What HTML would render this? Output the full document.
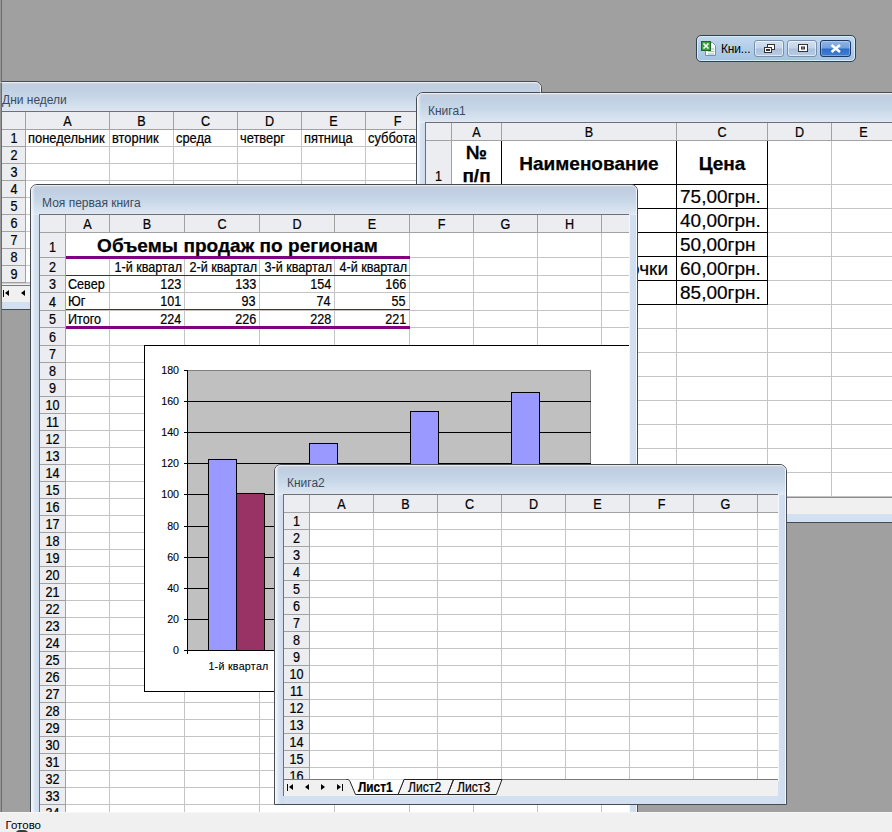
<!DOCTYPE html>
<html lang="ru"><head><meta charset="utf-8"><title>Excel</title>
<style>
html,body{margin:0;padding:0}
body{width:892px;height:832px;overflow:hidden;position:relative;background:#a0a0a0;font-family:"Liberation Sans",sans-serif;font-size:13.33px;color:#000}
div,span,i,b{position:absolute;box-sizing:border-box;display:block;white-space:nowrap}
i{font-style:normal}
.win{border:1px solid #474b52;border-radius:7px 7px 0 0;overflow:hidden;background:linear-gradient(90deg,#f6f9fd 0,#e9f0f9 2px,#d6e2f1 4px,#cedcee 8px,rgba(206,220,238,0) 9px),linear-gradient(270deg,#f4f8fc 0,#f4f8fc 1px,#d0ddf0 1px,#d3e0f1 8px,rgba(211,224,241,0) 9px),#d3e0f1}
.win:before{content:"";position:absolute;left:0;top:0;right:0;height:12px;border:1px solid rgba(255,255,255,.42);border-bottom:0;border-radius:6px 6px 0 0;z-index:2}
.tb{left:0;top:0;right:0;height:30px;background:linear-gradient(90deg,rgba(255,255,255,.75) 0,rgba(255,255,255,.4) 2px,rgba(255,255,255,0) 4px),linear-gradient(270deg,rgba(255,255,255,.65) 0,rgba(255,255,255,.65) 1px,rgba(255,255,255,0) 1px),linear-gradient(#dfe5ee 0,#c6cedc 2px,#bfcfe2 6px,#c9d8e8 55%,#dbe5f2 92%,#e3eaf5 100%)}
.tt{font-size:12px;line-height:14px;color:#394b60;letter-spacing:0}
.sheet{background:#fff;overflow:hidden;border-left:1px solid #6e7074;border-top:1px solid #6e7074;box-shadow:1px 1px 0 #f4f8fc}
.hr{left:0;top:0;right:0;background:#ecedf1}
.hc{left:0;top:0;bottom:0;background:#ecedf1}
.h{left:0;right:0;height:1px;background:#c4c4c4}
.v{top:0;bottom:0;width:1px;background:#c4c4c4}
.hh{height:1px;background:#a2a2a2}
.hv{width:1px;background:#a2a2a2}
.c{text-align:center}
.r{text-align:right}
.t{line-height:17px;height:17px;font-size:14px;-webkit-text-stroke:.22px #000;transform:scaleX(.9);transform-origin:0 50%}
.t.c{transform-origin:50% 50%}
.t.r{transform-origin:100% 50%}
.big{font-size:19px}
.k{background:#000}
.p{background:#800080}
.bar{background:#f0f0f0}
</style></head>
<body>
<div id="mini" style="left:696px;top:35px;width:160px;height:27px;border:1px solid #2f4253;border-radius:5px;background:linear-gradient(#c4d9ee 0,#b2cde9 50%,#a5c4e3 100%);box-shadow:inset 0 0 0 1px #d4eef9">
<svg style="position:absolute;left:3px;top:4px" width="17" height="17" viewBox="0 0 17 17"><path d="M5.500 2.500h7l3 3v10h-10z" fill="#f4f7fc" stroke="#6f8fc2"/><path d="M8 9h6M8 11.500h6M8 14h6" stroke="#9db6dd"/><rect x="1.500" y="1.500" width="9" height="9" fill="#3f9e3c" stroke="#1f6b22"/><path d="M3.500 3.500l5 5M8.500 3.500l-5 5" stroke="#fff" stroke-width="1.600"/></svg>
<span style="left:24px;top:6px;font-size:12px;line-height:15px;color:#000;letter-spacing:-.15px">Кни...</span>
<div style="left:57px;top:4px;width:30px;height:17px;border:1px solid #7990aa;border-radius:3px;background:linear-gradient(#d3e1f0 0,#c3d5e9 48%,#a9c0da 52%,#b9cde4 100%);box-shadow:inset 0 0 0 1px rgba(255,255,255,.55)">
<svg style="position:absolute;left:8px;top:2px" width="13" height="11" viewBox="0 0 13 11"><rect x="4.500" y="1.500" width="7" height="5" fill="#fff" stroke="#333" /><rect x="1.500" y="4.500" width="7" height="5" fill="#fff" stroke="#333"/><rect x="3.500" y="6.500" width="3" height="1" fill="#ccd" stroke="#333"/></svg></div>
<div style="left:90px;top:4px;width:30px;height:17px;border:1px solid #7990aa;border-radius:3px;background:linear-gradient(#d3e1f0 0,#c3d5e9 48%,#a9c0da 52%,#b9cde4 100%);box-shadow:inset 0 0 0 1px rgba(255,255,255,.55)">
<svg style="position:absolute;left:9px;top:2px" width="12" height="11" viewBox="0 0 12 11"><rect x="1.500" y="1.500" width="9" height="7" fill="#fff" stroke="#333"/><rect x="4.500" y="4" width="3" height="2" fill="#aab" stroke="#333"/></svg></div>
<div style="left:123px;top:4px;width:31px;height:17px;border:1px solid #1d3a63;border-radius:3px;background:linear-gradient(#8fb5e6 0,#729fde 48%,#2d6cc6 52%,#3f80d6 100%);box-shadow:inset 0 0 0 1px rgba(255,255,255,.3)">
<svg style="position:absolute;left:9px;top:3px" width="12" height="9" viewBox="0 0 12 9"><path d="M1.500 1l8.500 7M10 1l-8.500 7" stroke="#fff" stroke-width="2.500"/></svg></div>
</div>
<div class="win" id="w1" style="left:-6px;top:81px;width:548px;height:229px">
<div class="tb"></div>
<span class="tt" style="left:7px;top:11px">Дни недели</span>
<div class="sheet" style="left:6px;top:29px;width:540px;height:172px">
<i class="h" style="top:34px"></i>
<i class="h" style="top:51px"></i>
<i class="h" style="top:68px"></i>
<i class="h" style="top:85px"></i>
<i class="h" style="top:102px"></i>
<i class="h" style="top:119px"></i>
<i class="h" style="top:136px"></i>
<i class="h" style="top:153px"></i>
<i class="h" style="top:170px"></i>
<i class="v" style="left:107px"></i>
<i class="v" style="left:171px"></i>
<i class="v" style="left:235px"></i>
<i class="v" style="left:299px"></i>
<i class="v" style="left:363px"></i>
<i class="v" style="left:427px"></i>
<i class="v" style="left:491px"></i>
<i class="v" style="left:555px"></i>
<span class="t" style="left:26px;top:18px;transform:scaleX(.92)">понедельник</span><span class="t" style="left:110px;top:18px;transform:scaleX(.92)">вторник</span><span class="t" style="left:174px;top:18px;transform:scaleX(.92)">среда</span><span class="t" style="left:238px;top:18px;transform:scaleX(.92)">четверг</span><span class="t" style="left:302px;top:18px;transform:scaleX(.92)">пятница</span><span class="t" style="left:366px;top:18px;transform:scaleX(.92)">суббота</span>
<div class="hr" style="height:17px"></div>
<div class="hc" style="width:24px"></div>
<i class="hh" style="left:0;right:0;top:17px"></i>
<i class="hv" style="top:0;bottom:0;left:23px"></i>
<i class="hv" style="top:0;height:17px;left:107px"></i>
<i class="hv" style="top:0;height:17px;left:171px"></i>
<i class="hv" style="top:0;height:17px;left:235px"></i>
<i class="hv" style="top:0;height:17px;left:299px"></i>
<i class="hv" style="top:0;height:17px;left:363px"></i>
<i class="hv" style="top:0;height:17px;left:427px"></i>
<i class="hv" style="top:0;height:17px;left:491px"></i>
<i class="hv" style="top:0;height:17px;left:555px"></i>
<i class="hh" style="left:0;width:24px;top:34px"></i>
<i class="hh" style="left:0;width:24px;top:51px"></i>
<i class="hh" style="left:0;width:24px;top:68px"></i>
<i class="hh" style="left:0;width:24px;top:85px"></i>
<i class="hh" style="left:0;width:24px;top:102px"></i>
<i class="hh" style="left:0;width:24px;top:119px"></i>
<i class="hh" style="left:0;width:24px;top:136px"></i>
<i class="hh" style="left:0;width:24px;top:153px"></i>
<i class="hh" style="left:0;width:24px;top:170px"></i>
<span class="t c" style="left:24px;width:83px;top:1px">A</span>
<span class="t c" style="left:108px;width:63px;top:1px">B</span>
<span class="t c" style="left:172px;width:63px;top:1px">C</span>
<span class="t c" style="left:236px;width:63px;top:1px">D</span>
<span class="t c" style="left:300px;width:63px;top:1px">E</span>
<span class="t c" style="left:364px;width:63px;top:1px">F</span>
<span class="t c" style="left:428px;width:63px;top:1px">G</span>
<span class="t c" style="left:492px;width:63px;top:1px">H</span>
<span class="t c" style="left:0;width:24px;top:18px">1</span>
<span class="t c" style="left:0;width:24px;top:35px">2</span>
<span class="t c" style="left:0;width:24px;top:52px">3</span>
<span class="t c" style="left:0;width:24px;top:69px">4</span>
<span class="t c" style="left:0;width:24px;top:86px">5</span>
<span class="t c" style="left:0;width:24px;top:103px">6</span>
<span class="t c" style="left:0;width:24px;top:120px">7</span>
<span class="t c" style="left:0;width:24px;top:137px">8</span>
<span class="t c" style="left:0;width:24px;top:154px">9</span>
</div>
<div class="bar" style="left:7px;top:201px;width:540px;height:19px;border-top:1px solid #cfcfcf"><i style="left:0;right:0;top:1px;height:1px;background:#77797d"></i><i class="k" style="left:1px;top:6px;width:1px;height:7px"></i><i style="left:3px;top:6px;border-right:4px solid #000;border-top:3.500px solid transparent;border-bottom:3.500px solid transparent;width:0;height:0"></i><i style="left:19px;top:6px;border-right:4px solid #000;border-top:3.500px solid transparent;border-bottom:3.500px solid transparent;width:0;height:0"></i><i style="left:35px;top:6px;border-left:4px solid #000;border-top:3.500px solid transparent;border-bottom:3.500px solid transparent;width:0;height:0"></i><i style="left:51px;top:6px;border-left:4px solid #000;border-top:3.500px solid transparent;border-bottom:3.500px solid transparent;width:0;height:0"></i><i class="k" style="left:56px;top:6px;width:1px;height:7px"></i></div>
</div>
<div class="win" id="w2" style="left:416px;top:92px;width:485px;height:431px">
<div class="tb"></div>
<span class="tt" style="left:11px;top:11px">Книга1</span>
<div class="sheet" style="left:8px;top:29px;width:480px;height:375px">
<i class="h" style="top:61px"></i>
<i class="h" style="top:85px"></i>
<i class="h" style="top:109px"></i>
<i class="h" style="top:133px"></i>
<i class="h" style="top:157px"></i>
<i class="h" style="top:181px"></i>
<i class="h" style="top:205px"></i>
<i class="h" style="top:229px"></i>
<i class="h" style="top:253px"></i>
<i class="h" style="top:277px"></i>
<i class="h" style="top:301px"></i>
<i class="h" style="top:325px"></i>
<i class="h" style="top:349px"></i>
<i class="h" style="top:373px"></i>
<i class="v" style="left:75px"></i>
<i class="v" style="left:250px"></i>
<i class="v" style="left:341px"></i>
<i class="v" style="left:405px"></i>
<i class="v" style="left:469px"></i>
<i class="k" style="left:26px;width:316px;top:17px;height:1px"></i><i class="k" style="left:26px;width:316px;top:61px;height:1px"></i><i class="k" style="left:26px;width:316px;top:85px;height:1px"></i><i class="k" style="left:26px;width:316px;top:109px;height:1px"></i><i class="k" style="left:26px;width:316px;top:133px;height:1px"></i><i class="k" style="left:26px;width:316px;top:157px;height:1px"></i><i class="k" style="left:26px;width:316px;top:181px;height:1px"></i><i class="k" style="left:25px;top:17px;width:1px;height:165px"></i><i class="k" style="left:75px;top:17px;width:1px;height:165px"></i><i class="k" style="left:250px;top:17px;width:1px;height:165px"></i><i class="k" style="left:341px;top:17px;width:1px;height:165px"></i><span class="c" style="left:26px;width:49px;top:18px;font-weight:bold;font-size:19px;-webkit-text-stroke:.25px #000;line-height:23px">№<br>п/п</span><span class="c" style="left:76px;width:174px;top:19px;font-weight:bold;font-size:19px;-webkit-text-stroke:.25px #000;line-height:43px">Наименование</span><span class="c" style="left:251px;width:90px;top:19px;font-weight:bold;font-size:19px;-webkit-text-stroke:.25px #000;line-height:43px">Цена</span><span style="left:254px;top:62px;font-size:19px;-webkit-text-stroke:.2px #000;line-height:24px">75,00грн.</span><span style="left:254px;top:86px;font-size:19px;-webkit-text-stroke:.2px #000;line-height:24px">40,00грн.</span><span style="left:254px;top:110px;font-size:19px;-webkit-text-stroke:.2px #000;line-height:24px">50,00грн</span><span style="left:254px;top:134px;font-size:19px;-webkit-text-stroke:.2px #000;line-height:24px">60,00грн.</span><span style="left:254px;top:158px;font-size:19px;-webkit-text-stroke:.2px #000;line-height:24px">85,00грн.</span><span style="left:78px;top:62px;font-size:19px;-webkit-text-stroke:.2px #000;line-height:24px">Карандаши</span><span style="left:78px;top:86px;font-size:19px;-webkit-text-stroke:.2px #000;line-height:24px">Ручки</span><span style="left:78px;top:110px;font-size:19px;-webkit-text-stroke:.2px #000;line-height:24px">Тетради</span><span style="right:237px;top:134px;font-size:19px;-webkit-text-stroke:.2px #000;line-height:24px">Ручки-закладочки</span><span style="left:78px;top:158px;font-size:19px;-webkit-text-stroke:.2px #000;line-height:24px">Линейки</span>
<div class="hr" style="height:17px"></div>
<div class="hc" style="width:25px"></div>
<i class="hh" style="left:0;right:0;top:17px"></i>
<i class="hv" style="top:0;bottom:0;left:25px"></i>
<i class="hv" style="top:0;height:17px;left:75px"></i>
<i class="hv" style="top:0;height:17px;left:250px"></i>
<i class="hv" style="top:0;height:17px;left:341px"></i>
<i class="hv" style="top:0;height:17px;left:405px"></i>
<i class="hv" style="top:0;height:17px;left:469px"></i>
<i class="hh" style="left:0;width:25px;top:61px"></i>
<i class="hh" style="left:0;width:25px;top:85px"></i>
<i class="hh" style="left:0;width:25px;top:109px"></i>
<i class="hh" style="left:0;width:25px;top:133px"></i>
<i class="hh" style="left:0;width:25px;top:157px"></i>
<i class="hh" style="left:0;width:25px;top:181px"></i>
<i class="hh" style="left:0;width:25px;top:205px"></i>
<i class="hh" style="left:0;width:25px;top:229px"></i>
<i class="hh" style="left:0;width:25px;top:253px"></i>
<i class="hh" style="left:0;width:25px;top:277px"></i>
<i class="hh" style="left:0;width:25px;top:301px"></i>
<i class="hh" style="left:0;width:25px;top:325px"></i>
<i class="hh" style="left:0;width:25px;top:349px"></i>
<i class="hh" style="left:0;width:25px;top:373px"></i>
<span class="t c" style="left:26px;width:49px;top:1px">A</span>
<span class="t c" style="left:76px;width:174px;top:1px">B</span>
<span class="t c" style="left:251px;width:90px;top:1px">C</span>
<span class="t c" style="left:342px;width:63px;top:1px">D</span>
<span class="t c" style="left:406px;width:63px;top:1px">E</span>
<span class="t c" style="left:0;width:25px;top:45px">1</span>
<span class="t c" style="left:0;width:25px;top:69px"></span>
<span class="t c" style="left:0;width:25px;top:93px"></span>
<span class="t c" style="left:0;width:25px;top:117px"></span>
<span class="t c" style="left:0;width:25px;top:141px"></span>
<span class="t c" style="left:0;width:25px;top:165px"></span>
<span class="t c" style="left:0;width:25px;top:189px"></span>
<span class="t c" style="left:0;width:25px;top:213px"></span>
<span class="t c" style="left:0;width:25px;top:237px"></span>
<span class="t c" style="left:0;width:25px;top:261px"></span>
<span class="t c" style="left:0;width:25px;top:285px"></span>
<span class="t c" style="left:0;width:25px;top:309px"></span>
<span class="t c" style="left:0;width:25px;top:333px"></span>
<span class="t c" style="left:0;width:25px;top:357px"></span>
</div>
<div class="bar" style="left:8px;top:404px;width:480px;height:17px;border-top:1px solid #8a8c90"></div>
</div>
<div class="win" id="w3" style="left:30px;top:184px;width:608px;height:657px">
<div class="tb"></div>
<span class="tt" style="left:11px;top:11px">Моя первая книга</span>
<div class="sheet" style="left:8px;top:29px;width:590px;height:620px">
<i class="h" style="top:42px"></i>
<i class="h" style="top:60px"></i>
<i class="h" style="top:77px"></i>
<i class="h" style="top:95px"></i>
<i class="h" style="top:112px"></i>
<i class="h" style="top:130px"></i>
<i class="h" style="top:147px"></i>
<i class="h" style="top:164px"></i>
<i class="h" style="top:181px"></i>
<i class="h" style="top:198px"></i>
<i class="h" style="top:215px"></i>
<i class="h" style="top:232px"></i>
<i class="h" style="top:249px"></i>
<i class="h" style="top:266px"></i>
<i class="h" style="top:283px"></i>
<i class="h" style="top:300px"></i>
<i class="h" style="top:317px"></i>
<i class="h" style="top:334px"></i>
<i class="h" style="top:351px"></i>
<i class="h" style="top:368px"></i>
<i class="h" style="top:385px"></i>
<i class="h" style="top:402px"></i>
<i class="h" style="top:419px"></i>
<i class="h" style="top:436px"></i>
<i class="h" style="top:453px"></i>
<i class="h" style="top:470px"></i>
<i class="h" style="top:487px"></i>
<i class="h" style="top:504px"></i>
<i class="h" style="top:521px"></i>
<i class="h" style="top:538px"></i>
<i class="h" style="top:555px"></i>
<i class="h" style="top:572px"></i>
<i class="h" style="top:589px"></i>
<i class="h" style="top:606px"></i>
<i class="h" style="top:623px"></i>
<i class="v" style="left:69px"></i>
<i class="v" style="left:144px"></i>
<i class="v" style="left:219px"></i>
<i class="v" style="left:294px"></i>
<i class="v" style="left:369px"></i>
<i class="v" style="left:433px"></i>
<i class="v" style="left:497px"></i>
<i class="v" style="left:561px"></i>
<i class="v" style="left:625px"></i>
<span class="c" style="left:26px;width:343px;top:18px;height:23px;background:#fff;font-weight:bold;font-size:19px;-webkit-text-stroke:.25px #000;letter-spacing:.05px;line-height:26px">Объемы продаж по регионам</span>
<i class="p" style="left:26px;width:344px;top:41px;height:3px"></i>
<i class="p" style="left:26px;width:344px;top:60px;height:1px"></i>
<i class="p" style="left:26px;width:344px;top:94px;height:1px"></i>
<i class="p" style="left:26px;width:344px;top:111px;height:3px"></i>
<span class="t r" style="right:447px;top:44px">1-й квартал</span>
<span class="t r" style="right:372px;top:44px">2-й квартал</span>
<span class="t r" style="right:297px;top:44px">3-й квартал</span>
<span class="t r" style="right:222px;top:44px">4-й квартал</span>
<span class="t" style="left:28px;top:61px">Север</span>
<span class="t r" style="right:448px;top:61px">123</span>
<span class="t r" style="right:373px;top:61px">133</span>
<span class="t r" style="right:298px;top:61px">154</span>
<span class="t r" style="right:223px;top:61px">166</span>
<span class="t" style="left:28px;top:78px">Юг</span>
<span class="t r" style="right:448px;top:78px">101</span>
<span class="t r" style="right:373px;top:78px">93</span>
<span class="t r" style="right:298px;top:78px">74</span>
<span class="t r" style="right:223px;top:78px">55</span>
<span class="t" style="left:28px;top:96px">Итого</span>
<span class="t r" style="right:448px;top:96px">224</span>
<span class="t r" style="right:373px;top:96px">226</span>
<span class="t r" style="right:298px;top:96px">228</span>
<span class="t r" style="right:223px;top:96px">221</span>
<div id="chart" style="left:104px;top:130px;width:520px;height:347px;background:#fff;border:1px solid #000;font-size:10.67px;-webkit-text-stroke:.1px #000"><div style="left:42px;top:24px;width:404px;height:280px;background:#c0c0c0;border-top:1px solid #808080;border-right:1px solid #808080"></div><i class="k" style="left:39px;width:4px;top:24px;height:1px"></i><span class="r" style="left:5px;width:29px;top:17px;line-height:14px">180</span><i class="k" style="left:42px;width:404px;top:55px;height:1px"></i><i class="k" style="left:39px;width:4px;top:55px;height:1px"></i><span class="r" style="left:5px;width:29px;top:48px;line-height:14px">160</span><i class="k" style="left:42px;width:404px;top:86px;height:1px"></i><i class="k" style="left:39px;width:4px;top:86px;height:1px"></i><span class="r" style="left:5px;width:29px;top:79px;line-height:14px">140</span><i class="k" style="left:42px;width:404px;top:117px;height:1px"></i><i class="k" style="left:39px;width:4px;top:117px;height:1px"></i><span class="r" style="left:5px;width:29px;top:110px;line-height:14px">120</span><i class="k" style="left:42px;width:404px;top:148px;height:1px"></i><i class="k" style="left:39px;width:4px;top:148px;height:1px"></i><span class="r" style="left:5px;width:29px;top:141px;line-height:14px">100</span><i class="k" style="left:42px;width:404px;top:180px;height:1px"></i><i class="k" style="left:39px;width:4px;top:180px;height:1px"></i><span class="r" style="left:5px;width:29px;top:173px;line-height:14px">80</span><i class="k" style="left:42px;width:404px;top:211px;height:1px"></i><i class="k" style="left:39px;width:4px;top:211px;height:1px"></i><span class="r" style="left:5px;width:29px;top:204px;line-height:14px">60</span><i class="k" style="left:42px;width:404px;top:242px;height:1px"></i><i class="k" style="left:39px;width:4px;top:242px;height:1px"></i><span class="r" style="left:5px;width:29px;top:235px;line-height:14px">40</span><i class="k" style="left:42px;width:404px;top:273px;height:1px"></i><i class="k" style="left:39px;width:4px;top:273px;height:1px"></i><span class="r" style="left:5px;width:29px;top:266px;line-height:14px">20</span><i class="k" style="left:39px;width:4px;top:304px;height:1px"></i><span class="r" style="left:5px;width:29px;top:297px;line-height:14px">0</span><i class="k" style="left:42px;width:1px;top:24px;height:284px"></i><i class="k" style="left:42px;width:404px;top:304px;height:1px"></i><div style="left:63px;top:113px;width:29px;height:192px;background:#9999ff;border:1px solid #000"></div><div style="left:91px;top:147px;width:29px;height:158px;background:#993366;border:1px solid #000"></div><span class="c" style="left:43px;width:101px;top:313px;line-height:14px;letter-spacing:.28px">1-й квартал</span><div style="left:164px;top:97px;width:29px;height:208px;background:#9999ff;border:1px solid #000"></div><div style="left:192px;top:159px;width:29px;height:146px;background:#993366;border:1px solid #000"></div><span class="c" style="left:143px;width:101px;top:313px;line-height:14px;letter-spacing:.28px">2-й квартал</span><div style="left:265px;top:65px;width:29px;height:240px;background:#9999ff;border:1px solid #000"></div><div style="left:293px;top:189px;width:29px;height:116px;background:#993366;border:1px solid #000"></div><span class="c" style="left:244px;width:101px;top:313px;line-height:14px;letter-spacing:.28px">3-й квартал</span><div style="left:366px;top:46px;width:29px;height:259px;background:#9999ff;border:1px solid #000"></div><div style="left:394px;top:218px;width:29px;height:87px;background:#993366;border:1px solid #000"></div><span class="c" style="left:345px;width:101px;top:313px;line-height:14px;letter-spacing:.28px">4-й квартал</span></div>
<div class="hr" style="height:17px"></div>
<div class="hc" style="width:25px"></div>
<i class="hh" style="left:0;right:0;top:17px"></i>
<i class="hv" style="top:0;bottom:0;left:25px"></i>
<i class="hv" style="top:0;height:17px;left:69px"></i>
<i class="hv" style="top:0;height:17px;left:144px"></i>
<i class="hv" style="top:0;height:17px;left:219px"></i>
<i class="hv" style="top:0;height:17px;left:294px"></i>
<i class="hv" style="top:0;height:17px;left:369px"></i>
<i class="hv" style="top:0;height:17px;left:433px"></i>
<i class="hv" style="top:0;height:17px;left:497px"></i>
<i class="hv" style="top:0;height:17px;left:561px"></i>
<i class="hv" style="top:0;height:17px;left:625px"></i>
<i class="hh" style="left:0;width:25px;top:42px"></i>
<i class="hh" style="left:0;width:25px;top:60px"></i>
<i class="hh" style="left:0;width:25px;top:77px"></i>
<i class="hh" style="left:0;width:25px;top:95px"></i>
<i class="hh" style="left:0;width:25px;top:112px"></i>
<i class="hh" style="left:0;width:25px;top:130px"></i>
<i class="hh" style="left:0;width:25px;top:147px"></i>
<i class="hh" style="left:0;width:25px;top:164px"></i>
<i class="hh" style="left:0;width:25px;top:181px"></i>
<i class="hh" style="left:0;width:25px;top:198px"></i>
<i class="hh" style="left:0;width:25px;top:215px"></i>
<i class="hh" style="left:0;width:25px;top:232px"></i>
<i class="hh" style="left:0;width:25px;top:249px"></i>
<i class="hh" style="left:0;width:25px;top:266px"></i>
<i class="hh" style="left:0;width:25px;top:283px"></i>
<i class="hh" style="left:0;width:25px;top:300px"></i>
<i class="hh" style="left:0;width:25px;top:317px"></i>
<i class="hh" style="left:0;width:25px;top:334px"></i>
<i class="hh" style="left:0;width:25px;top:351px"></i>
<i class="hh" style="left:0;width:25px;top:368px"></i>
<i class="hh" style="left:0;width:25px;top:385px"></i>
<i class="hh" style="left:0;width:25px;top:402px"></i>
<i class="hh" style="left:0;width:25px;top:419px"></i>
<i class="hh" style="left:0;width:25px;top:436px"></i>
<i class="hh" style="left:0;width:25px;top:453px"></i>
<i class="hh" style="left:0;width:25px;top:470px"></i>
<i class="hh" style="left:0;width:25px;top:487px"></i>
<i class="hh" style="left:0;width:25px;top:504px"></i>
<i class="hh" style="left:0;width:25px;top:521px"></i>
<i class="hh" style="left:0;width:25px;top:538px"></i>
<i class="hh" style="left:0;width:25px;top:555px"></i>
<i class="hh" style="left:0;width:25px;top:572px"></i>
<i class="hh" style="left:0;width:25px;top:589px"></i>
<i class="hh" style="left:0;width:25px;top:606px"></i>
<i class="hh" style="left:0;width:25px;top:623px"></i>
<span class="t c" style="left:26px;width:43px;top:1px">A</span>
<span class="t c" style="left:70px;width:74px;top:1px">B</span>
<span class="t c" style="left:145px;width:74px;top:1px">C</span>
<span class="t c" style="left:220px;width:74px;top:1px">D</span>
<span class="t c" style="left:295px;width:74px;top:1px">E</span>
<span class="t c" style="left:370px;width:63px;top:1px">F</span>
<span class="t c" style="left:434px;width:63px;top:1px">G</span>
<span class="t c" style="left:498px;width:63px;top:1px">H</span>
<span class="t c" style="left:562px;width:63px;top:1px">I</span>
<span class="t c" style="left:0;width:25px;top:24px">1</span>
<span class="t c" style="left:0;width:25px;top:44px">2</span>
<span class="t c" style="left:0;width:25px;top:61px">3</span>
<span class="t c" style="left:0;width:25px;top:79px">4</span>
<span class="t c" style="left:0;width:25px;top:96px">5</span>
<span class="t c" style="left:0;width:25px;top:114px">6</span>
<span class="t c" style="left:0;width:25px;top:131px">7</span>
<span class="t c" style="left:0;width:25px;top:148px">8</span>
<span class="t c" style="left:0;width:25px;top:165px">9</span>
<span class="t c" style="left:0;width:25px;top:182px">10</span>
<span class="t c" style="left:0;width:25px;top:199px">11</span>
<span class="t c" style="left:0;width:25px;top:216px">12</span>
<span class="t c" style="left:0;width:25px;top:233px">13</span>
<span class="t c" style="left:0;width:25px;top:250px">14</span>
<span class="t c" style="left:0;width:25px;top:267px">15</span>
<span class="t c" style="left:0;width:25px;top:284px">16</span>
<span class="t c" style="left:0;width:25px;top:301px">17</span>
<span class="t c" style="left:0;width:25px;top:318px">18</span>
<span class="t c" style="left:0;width:25px;top:335px">19</span>
<span class="t c" style="left:0;width:25px;top:352px">20</span>
<span class="t c" style="left:0;width:25px;top:369px">21</span>
<span class="t c" style="left:0;width:25px;top:386px">22</span>
<span class="t c" style="left:0;width:25px;top:403px">23</span>
<span class="t c" style="left:0;width:25px;top:420px">24</span>
<span class="t c" style="left:0;width:25px;top:437px">25</span>
<span class="t c" style="left:0;width:25px;top:454px">26</span>
<span class="t c" style="left:0;width:25px;top:471px">27</span>
<span class="t c" style="left:0;width:25px;top:488px">28</span>
<span class="t c" style="left:0;width:25px;top:505px">29</span>
<span class="t c" style="left:0;width:25px;top:522px">30</span>
<span class="t c" style="left:0;width:25px;top:539px">31</span>
<span class="t c" style="left:0;width:25px;top:556px">32</span>
<span class="t c" style="left:0;width:25px;top:573px">33</span>
<span class="t c" style="left:0;width:25px;top:590px">34</span>
<span class="t c" style="left:0;width:25px;top:607px">35</span>
</div>
</div>
<div class="win" id="w4" style="left:274px;top:464px;width:513px;height:341px">
<div class="tb"></div>
<span class="tt" style="left:12px;top:11px">Книга2</span>
<div class="sheet" style="left:8px;top:29px;width:495px;height:286px">
<i class="h" style="top:34px"></i>
<i class="h" style="top:51px"></i>
<i class="h" style="top:68px"></i>
<i class="h" style="top:85px"></i>
<i class="h" style="top:102px"></i>
<i class="h" style="top:119px"></i>
<i class="h" style="top:136px"></i>
<i class="h" style="top:153px"></i>
<i class="h" style="top:170px"></i>
<i class="h" style="top:187px"></i>
<i class="h" style="top:204px"></i>
<i class="h" style="top:221px"></i>
<i class="h" style="top:238px"></i>
<i class="h" style="top:255px"></i>
<i class="h" style="top:272px"></i>
<i class="h" style="top:289px"></i>
<i class="v" style="left:89px"></i>
<i class="v" style="left:153px"></i>
<i class="v" style="left:217px"></i>
<i class="v" style="left:281px"></i>
<i class="v" style="left:345px"></i>
<i class="v" style="left:409px"></i>
<i class="v" style="left:473px"></i>
<i class="v" style="left:537px"></i>

<div class="hr" style="height:17px"></div>
<div class="hc" style="width:25px"></div>
<i class="hh" style="left:0;right:0;top:17px"></i>
<i class="hv" style="top:0;bottom:0;left:25px"></i>
<i class="hv" style="top:0;height:17px;left:89px"></i>
<i class="hv" style="top:0;height:17px;left:153px"></i>
<i class="hv" style="top:0;height:17px;left:217px"></i>
<i class="hv" style="top:0;height:17px;left:281px"></i>
<i class="hv" style="top:0;height:17px;left:345px"></i>
<i class="hv" style="top:0;height:17px;left:409px"></i>
<i class="hv" style="top:0;height:17px;left:473px"></i>
<i class="hv" style="top:0;height:17px;left:537px"></i>
<i class="hh" style="left:0;width:25px;top:34px"></i>
<i class="hh" style="left:0;width:25px;top:51px"></i>
<i class="hh" style="left:0;width:25px;top:68px"></i>
<i class="hh" style="left:0;width:25px;top:85px"></i>
<i class="hh" style="left:0;width:25px;top:102px"></i>
<i class="hh" style="left:0;width:25px;top:119px"></i>
<i class="hh" style="left:0;width:25px;top:136px"></i>
<i class="hh" style="left:0;width:25px;top:153px"></i>
<i class="hh" style="left:0;width:25px;top:170px"></i>
<i class="hh" style="left:0;width:25px;top:187px"></i>
<i class="hh" style="left:0;width:25px;top:204px"></i>
<i class="hh" style="left:0;width:25px;top:221px"></i>
<i class="hh" style="left:0;width:25px;top:238px"></i>
<i class="hh" style="left:0;width:25px;top:255px"></i>
<i class="hh" style="left:0;width:25px;top:272px"></i>
<i class="hh" style="left:0;width:25px;top:289px"></i>
<span class="t c" style="left:26px;width:63px;top:1px">A</span>
<span class="t c" style="left:90px;width:63px;top:1px">B</span>
<span class="t c" style="left:154px;width:63px;top:1px">C</span>
<span class="t c" style="left:218px;width:63px;top:1px">D</span>
<span class="t c" style="left:282px;width:63px;top:1px">E</span>
<span class="t c" style="left:346px;width:63px;top:1px">F</span>
<span class="t c" style="left:410px;width:63px;top:1px">G</span>
<span class="t c" style="left:474px;width:63px;top:1px">H</span>
<span class="t c" style="left:0;width:25px;top:18px">1</span>
<span class="t c" style="left:0;width:25px;top:35px">2</span>
<span class="t c" style="left:0;width:25px;top:52px">3</span>
<span class="t c" style="left:0;width:25px;top:69px">4</span>
<span class="t c" style="left:0;width:25px;top:86px">5</span>
<span class="t c" style="left:0;width:25px;top:103px">6</span>
<span class="t c" style="left:0;width:25px;top:120px">7</span>
<span class="t c" style="left:0;width:25px;top:137px">8</span>
<span class="t c" style="left:0;width:25px;top:154px">9</span>
<span class="t c" style="left:0;width:25px;top:171px">10</span>
<span class="t c" style="left:0;width:25px;top:188px">11</span>
<span class="t c" style="left:0;width:25px;top:205px">12</span>
<span class="t c" style="left:0;width:25px;top:222px">13</span>
<span class="t c" style="left:0;width:25px;top:239px">14</span>
<span class="t c" style="left:0;width:25px;top:256px">15</span>
<span class="t c" style="left:0;width:25px;top:273px">16</span>
</div>
<div class="bar" style="left:8px;top:314px;width:495px;height:17px;border-left:1px solid #6e7074"><i style="left:0;right:0;top:0;height:1px;background:#77797d"></i><i class="k" style="left:3px;top:5px;width:1px;height:7px"></i><i style="left:5px;top:5px;border-right:4px solid #000;border-top:3.500px solid transparent;border-bottom:3.500px solid transparent;width:0;height:0"></i><i style="left:21px;top:5px;border-right:4px solid #000;border-top:3.500px solid transparent;border-bottom:3.500px solid transparent;width:0;height:0"></i><i style="left:37px;top:5px;border-left:4px solid #000;border-top:3.500px solid transparent;border-bottom:3.500px solid transparent;width:0;height:0"></i><i style="left:53px;top:5px;border-left:4px solid #000;border-top:3.500px solid transparent;border-bottom:3.500px solid transparent;width:0;height:0"></i><i class="k" style="left:58px;top:5px;width:1px;height:7px"></i><svg style="position:absolute;left:62px;top:0" width="170" height="17" viewBox="0 0 170 17"><path d="M58 .5L52 15.500h49.700L107.500 .5zM107.500 .5L101.700 15.500h48.600L156 .5z" fill="#f4f4f4" stroke="#222"/><path d="M.5 .5h1c1.500 0 2 1 2.600 2.200L9.500 15.500h42.500L58 .5" fill="#fff" stroke="#222"/><path d="M2.500 0h55" stroke="#fff" stroke-width="1.200"/></svg><span class="t" style="left:74px;top:0;font-weight:bold;transform:scaleX(.845)">Лист1</span><span class="t" style="left:124px;top:0;transform:scaleX(.87)">Лист2</span><span class="t" style="left:172.500px;top:0;transform:scaleX(.87)">Лист3</span></div>
</div>
<div style="left:0;top:0;width:1px;height:812px;background:#979797"></div>
<div style="left:1px;top:0;width:1px;height:812px;background:#6c6c6c"></div>
<div id="status" style="left:0;top:812px;width:892px;height:20px;background:#f0f0f0;border-top:1px solid #f7f7f7"><span style="left:5.500px;top:5px;font-size:11.500px;line-height:14px">Готово</span><i style="left:15px;top:17px;width:14px;height:10px;border-radius:7px;background:#3a3a3a"></i></div>
</body></html>
